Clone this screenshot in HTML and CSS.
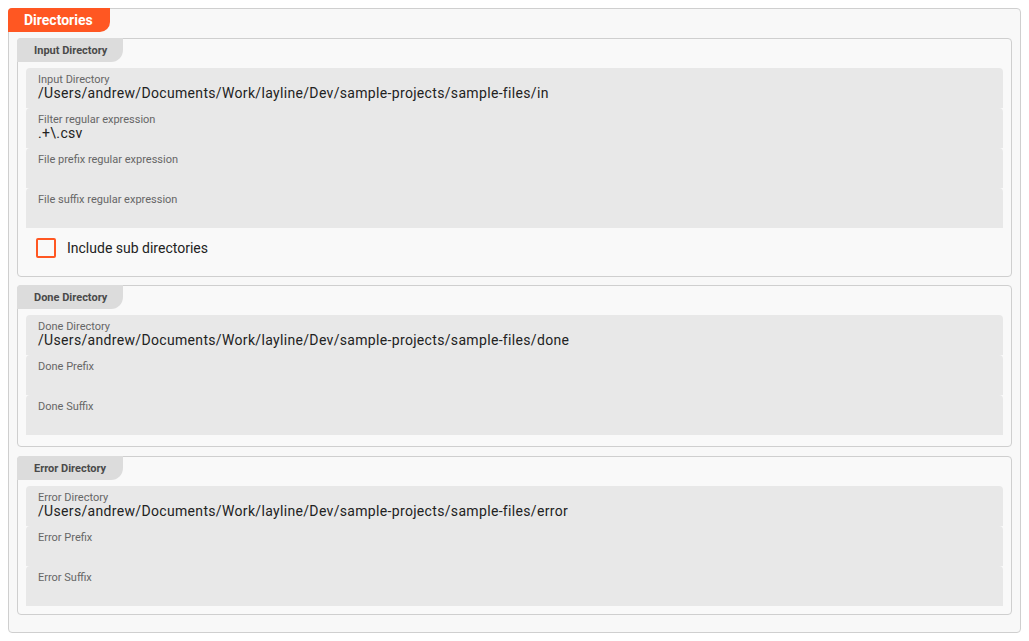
FILE: index.html
```html
<!DOCTYPE html>
<html>
<head>
<meta charset="utf-8">
<link rel="stylesheet" href="styles.css">
</head>
<body>
<div class="panel">
  <div class="panel-tab">Directories</div>
  <div class="groups">
    <section class="group">
      <div class="group-tab">Input Directory</div>
      <div class="fields">
        <div class="field"><div class="label">Input Directory</div><div class="value">/Users/andrew/Documents/Work/layline/Dev/sample-projects/sample-files/in</div></div>
        <div class="field"><div class="label">Filter regular expression</div><div class="value">.+\.csv</div></div>
        <div class="field"><div class="label">File prefix regular expression</div><div class="value"></div></div>
        <div class="field"><div class="label">File suffix regular expression</div><div class="value"></div></div>
      </div>
      <label class="check-row"><span class="box"></span><span class="check-label">Include sub directories</span></label>
    </section>
    <section class="group">
      <div class="group-tab">Done Directory</div>
      <div class="fields">
        <div class="field"><div class="label">Done Directory</div><div class="value">/Users/andrew/Documents/Work/layline/Dev/sample-projects/sample-files/done</div></div>
        <div class="field"><div class="label">Done Prefix</div><div class="value"></div></div>
        <div class="field"><div class="label">Done Suffix</div><div class="value"></div></div>
      </div>
    </section>
    <section class="group">
      <div class="group-tab">Error Directory</div>
      <div class="fields">
        <div class="field"><div class="label">Error Directory</div><div class="value">/Users/andrew/Documents/Work/layline/Dev/sample-projects/sample-files/error</div></div>
        <div class="field"><div class="label">Error Prefix</div><div class="value"></div></div>
        <div class="field"><div class="label">Error Suffix</div><div class="value"></div></div>
      </div>
    </section>
  </div>
</div>
</body>
</html>
```

FILE: styles.css
```css
html, body { background: #ffffff; }
body {
  margin: 8px;
  font-family: Roboto, "Liberation Sans", Arial, sans-serif;
  color: #222;
}
.panel {
  border: 1px solid #cfcfcf;
  border-radius: 4px;
  background: #f8f8f8;
  height: 625px;
  box-sizing: border-box;
}
.panel-tab {
  display: inline-flex;
  align-items: center;
  height: 24px;
  box-sizing: border-box;
  margin: -1px 0 0 -1px;
  padding: 0 0 0 16px;
  width: 102px;
  background: #ff5722;
  color: #fff;
  font-weight: 700;
  font-size: 14px;
  border-radius: 4px 0 10px 0;
}
.groups {
  display: flex;
  flex-direction: column;
  gap: 8px;
  padding: 6px 8px 0 8px;
}
.group {
  border: 1px solid #cfcfcf;
  border-radius: 4px;
  background: #f9f9f9;
  padding-bottom: 11px;
}
.group:last-child { padding-bottom: 8px; }
.group + .group + .group { margin-top: 1px; }
.group-tab {
  display: flex;
  align-items: center;
  width: 106px;
  height: 24px;
  box-sizing: border-box;
  margin: -1px 0 0 -1px;
  padding-left: 17px;
  background: #dcdcdc;
  color: #4a4a4a;
  font-size: 11px;
  font-weight: 700;
  border-radius: 4px 0 12px 0;
}
.fields {
  display: flex;
  flex-direction: column;
  margin: 6px 8px 0 8px;
}
.field {
  height: 40px;
  box-sizing: border-box;
  background: #e8e8e8;
  border-radius: 4px 4px 0 0;
  padding: 5px 12px 0 12px;
}
.label {
  font-size: 11px;
  color: #666;
  line-height: 14px;
}
.value {
  font-size: 14px;
  color: #222;
  line-height: 12px;
  letter-spacing: 0.33px;
}
.check-row {
  display: flex;
  align-items: center;
  gap: 11px;
  height: 37px;
  padding: 0 18px;
}
.box {
  width: 20px;
  height: 20px;
  box-sizing: border-box;
  border: 2px solid #ff5722;
  border-radius: 2px;
  margin-top: 3px;
}
.check-label {
  font-size: 14px;
  color: #222;
  margin-top: 3px;
}
```
